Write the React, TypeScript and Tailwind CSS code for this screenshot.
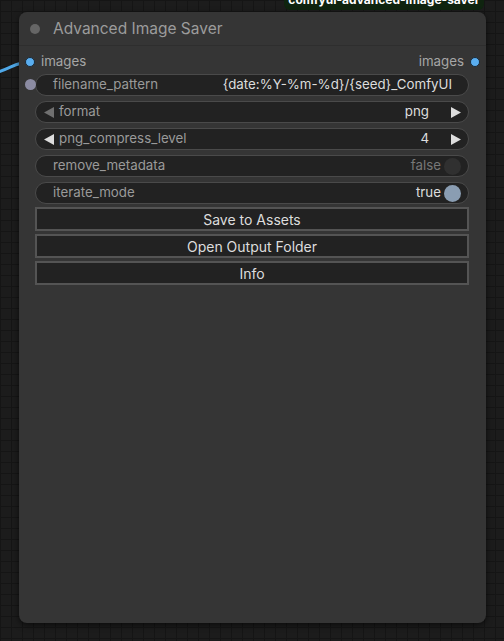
import React from "react";

const font = { fontFamily: "Inter, 'Noto Sans', sans-serif" };

const Tri = ({ dir, color }: { dir: "left" | "right"; color: string }) => (
  <svg width="10" height="11" viewBox="0 0 10 11" className="shrink-0">
    {dir === "left" ? (
      <polygon points="10,0 10,11 0,5.5" fill={color} />
    ) : (
      <polygon points="0,0 0,11 10,5.5" fill={color} />
    )}
  </svg>
);

const ComboRow = ({
  label,
  value,
  leftDim,
}: {
  label: string;
  value: string;
  leftDim?: boolean;
}) => (
  <div className="flex h-[22px] items-center rounded-full border border-[#4a4a4a] bg-[#222222] pl-[8px] pr-[7px] text-[13.3px]">
    <Tri dir="left" color={leftDim ? "#707070" : "#dddddd"} />
    <span className="ml-[5px] text-[#9a9a9a]">{label}</span>
    <span className="ml-auto mr-[22px] text-[#dddddd]">{value}</span>
    <Tri dir="right" color="#dddddd" />
  </div>
);

const ToggleRow = ({ label, on }: { label: string; on: boolean }) => (
  <div className="flex h-[22px] items-center rounded-full border border-[#4a4a4a] bg-[#222222] pl-[17px] pr-[7px] text-[13.3px]">
    <span className="text-[#9a9a9a]">{label}</span>
    <span className={`ml-auto mr-[3px] ${on ? "text-[#dddddd]" : "text-[#777777]"}`}>
      {on ? "true" : "false"}
    </span>
    <span
      className={`h-[17px] w-[17px] rounded-full ${on ? "bg-[#8a9db2]" : "bg-[#303030]"}`}
    />
  </div>
);

const Button = ({ label }: { label: string }) => (
  <div className="flex h-[24px] items-center justify-center border-2 border-[#545454] bg-[#222222] text-[14px] text-[#dddddd]">
    {label}
  </div>
);

export default function App() {
  return (
    <div
      style={font}
      className="relative h-[641px] w-[504px] overflow-hidden bg-[#1c1c1c] bg-[linear-gradient(to_right,#151515_1px,transparent_1px),linear-gradient(to_bottom,#151515_1px,transparent_1px)] bg-[size:11px_11px] pl-[19px] pt-[12px]"
    >
      {/* wire into the images input */}
      <svg className="absolute left-0 top-0" width="40" height="90" viewBox="0 0 40 90">
        <path d="M-2 72 C 12 68, 16 62, 30 62" stroke="#4fa8e8" strokeWidth="3" fill="none" />
      </svg>

      {/* pack badge */}
      <div className="absolute left-[284px] top-[-11px] flex h-[21px] w-[200px] items-center justify-center whitespace-nowrap rounded-[6px] bg-[#0f240f] text-[12px] font-bold text-white">
        comfyui-advanced-image-saver
      </div>

      <div className="relative flex h-[611px] w-[467px] flex-col rounded-[8px] bg-[#353535] shadow-[0_2px_6px_rgba(0,0,0,0.6)]">
        <div className="flex h-[34px] items-center border-b border-[#2e2e2e] pl-[11px]">
          <span className="h-[10px] w-[10px] rounded-full bg-[#666666]" />
          <span className="ml-[13px] text-[15.5px] text-[#9c9c9c]">Advanced Image Saver</span>
        </div>

        <div className="mt-[5px] flex h-[22px] items-center justify-between px-[6px] text-[13.3px] text-[#a6a6a6]">
          <div className="flex items-center">
            <span className="h-[10px] w-[10px] rounded-full border border-[#1a2a38] bg-[#5aaef0]" />
            <span className="ml-[6px]">images</span>
          </div>
          <div className="flex items-center">
            <span className="mr-[6px]">images</span>
            <span className="h-[10px] w-[10px] rounded-full border border-[#1a2a38] bg-[#5aaef0]" />
          </div>
        </div>

        <div className="mt-[1px] flex flex-col gap-[5px] pl-[16px] pr-[17px]">
          <div className="relative flex h-[22px] items-center rounded-full border border-[#4a4a4a] bg-[#222222] pl-[17px] pr-[16px] text-[13.3px]">
            <span className="absolute left-[-11px] top-[4px] h-[11px] w-[11px] rounded-full bg-[#8b8ba2]" />
            <span className="text-[#9a9a9a]">filename_pattern</span>
            <span className="ml-auto text-[#dddddd]">{"{date:%Y-%m-%d}/{seed}_ComfyUI"}</span>
          </div>
          <ComboRow label="format" value="png" leftDim />
          <ComboRow label="png_compress_level" value="4" />
          <ToggleRow label="remove_metadata" on={false} />
          <ToggleRow label="iterate_mode" on />
        </div>

        <div className="mt-[3px] flex flex-col gap-[3px] pl-[16px] pr-[17px]">
          <Button label="Save to Assets" />
          <Button label="Open Output Folder" />
          <Button label="Info" />
        </div>
      </div>
    </div>
  );
}
